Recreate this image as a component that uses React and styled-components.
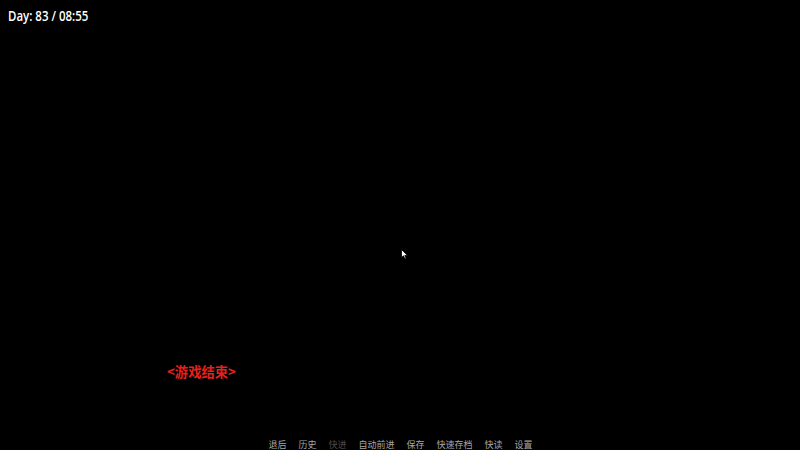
import React from "react";
import styled, { createGlobalStyle } from "styled-components";

const Global = createGlobalStyle`
  html, body { margin: 0; padding: 0; background: #000; }
  #root { width: 800px; height: 450px; }
`;

const Screen = styled.div`
  position: relative;
  width: 800px;
  height: 450px;
  background: #000;
  display: flex;
  flex-direction: column;
  overflow: hidden;
  font-family: "Open Sans", "Noto Sans CJK SC", sans-serif;
`;

const TopBar = styled.div`
  padding: 4px 0 0 8px;
  height: 24px;
  box-sizing: border-box;
`;

const DayLabel = styled.span`
  display: inline-block;
  color: #fff;
  font-size: 14px;
  font-weight: 600;
  line-height: 18px;
  transform: scaleX(0.82);
  transform-origin: left center;
  white-space: nowrap;
`;

const Stage = styled.div`
  flex: 1;
  display: flex;
  flex-direction: column;
  justify-content: flex-end;
  padding: 0 0 0 167px;
`;

const Dialogue = styled.div`
  color: #e8201c;
  font-family: "Noto Sans CJK SC", sans-serif;
  font-weight: 700;
  font-size: 13.3px;
  line-height: 18px;
  margin-bottom: 59px;
`;

const QuickMenu = styled.nav`
  display: flex;
  justify-content: center;
  gap: 12px;
  height: 10px;
  padding: 0 0 0 1px;
`;

const MenuItem = styled.span`
  font-family: "Noto Sans CJK SC", sans-serif;
  font-size: 9px;
  line-height: 10px;
  color: ${(p) => (p.$disabled ? "#4a4a4a" : "#a6a6a6")};
`;

const Cursor = styled.svg`
  position: absolute;
  left: 401px;
  top: 249px;
`;

const items = [
  ["退后"],
  ["历史"],
  ["快进", true],
  ["自动前进"],
  ["保存"],
  ["快速存档"],
  ["快读"],
  ["设置"],
];

export default function App() {
  return (
    <>
      <Global />
      <Screen>
        <TopBar>
          <DayLabel>Day: 83 / 08:55</DayLabel>
        </TopBar>
        <Stage>
          <Dialogue>&lt;游戏结束&gt;</Dialogue>
        </Stage>
        <QuickMenu>
          {items.map(([t, d]) => (
            <MenuItem key={t} $disabled={d}>
              {t}
            </MenuItem>
          ))}
        </QuickMenu>
        <Cursor width="8" height="11" viewBox="0 0 8 11">
          <path d="M0.5 0.5 L0.5 8.5 L2.5 6.8 L4 10 L5.2 9.4 L3.8 6.4 L6.5 6.4 Z" fill="#fff" stroke="#000" strokeWidth="0.8" />
        </Cursor>
      </Screen>
    </>
  );
}
